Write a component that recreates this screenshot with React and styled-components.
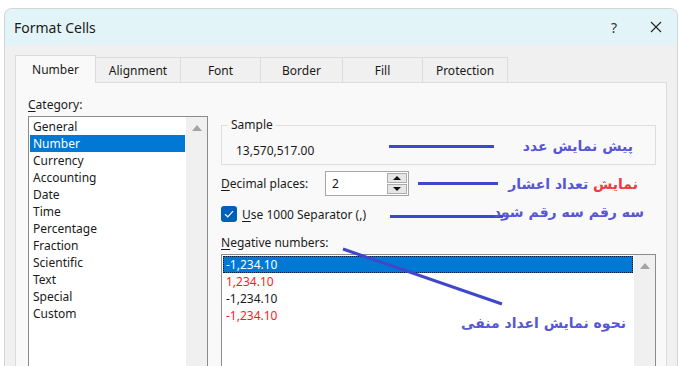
import React from "react";
import styled, { createGlobalStyle } from "styled-components";

const GlobalStyle = createGlobalStyle`
  html, body {
    margin: 0;
    padding: 0;
    background: #ffffff;
  }
  body {
    font-family: "Noto Sans", "Open Sans", sans-serif;
    font-size: 12px;
    color: #1a1a1a;
  }
`;

const Page = styled.div`
  width: 682px;
  height: 366px;
  padding: 8px 4px 0 4px;
  box-sizing: border-box;
  overflow: hidden;
`;

const Window = styled.div`
  height: 100%;
  display: flex;
  flex-direction: column;
  background: #f0f0f0;
  border: 1px solid #cfd6d8;
  border-bottom: none;
  border-radius: 8px 8px 0 0;
  overflow: hidden;
`;

const TitleBar = styled.div`
  height: 36px;
  display: flex;
  align-items: center;
  padding-left: 9px;
  background: #e3f4f8;
`;

const Title = styled.span`
  flex: 1;
  font-size: 14px;
  color: #1a1a1a;
`;

const TitleButton = styled.div`
  width: 42px;
  height: 36px;
  display: flex;
  align-items: center;
  justify-content: center;
  font-size: 14px;
  color: #333;
`;

const Body = styled.div`
  flex: 1;
  display: flex;
  flex-direction: column;
  padding: 10px 10px 0 10px;
`;

const TabRow = styled.div`
  display: flex;
  align-items: flex-end;
  height: 27px;
`;

const Tab = styled.div`
  width: ${(p) => p.$w}px;
  height: ${(p) => (p.$active ? 28 : 25)}px;
  margin-bottom: ${(p) => (p.$active ? -1 : 0)}px;
  box-sizing: border-box;
  display: flex;
  align-items: center;
  justify-content: center;
  background: ${(p) => (p.$active ? "#f9f9f9" : "#f0f0f0")};
  border: 1px solid #dcdcdc;
  border-bottom: none;
  margin-right: -1px;
  position: relative;
  z-index: ${(p) => (p.$active ? 2 : 1)};
  font-size: 12px;
  color: #1a1a1a;
`;

const Panel = styled.div`
  flex: 1;
  background: #f9f9f9;
  border: 1px solid #dcdcdc;
  border-bottom: none;
  display: grid;
  grid-template-columns: 180px 435px;
  column-gap: 13px;
  padding: 13px 10px 0 12px;
`;

const Column = styled.div`
  display: flex;
  flex-direction: column;
`;

const FieldLabel = styled.div`
  height: 17px;
  line-height: 17px;
  margin-top: ${(p) => p.$top || 0}px;
  margin-bottom: ${(p) => p.$gap || 0}px;
  u {
    text-decoration: underline;
    text-underline-offset: 2px;
  }
`;

const ListBox = styled.div`
  display: flex;
  background: #ffffff;
  border: 1px solid #8c8c8c;
  height: ${(p) => p.$h}px;
  box-sizing: border-box;
`;

const Items = styled.div`
  flex: 1;
  padding: 1px;
`;

const Item = styled.div`
  height: 17px;
  line-height: 17px;
  padding-left: 3px;
  white-space: nowrap;
  color: ${(p) => (p.$selected ? "#ffffff" : p.$red ? "#ff1a1a" : "#1a1a1a")};
  background: ${(p) => (p.$selected ? "#0078d4" : "transparent")};
  outline: ${(p) => (p.$focus ? "1px dotted #111" : "none")};
  outline-offset: -1px;
`;

const ScrollTrack = styled.div`
  width: 21px;
  background: #f0f0f0;
  display: flex;
  justify-content: center;
  padding-top: 8px;
  box-sizing: border-box;
`;

const ArrowUp = styled.div`
  width: 0;
  height: 0;
  border-left: 5px solid transparent;
  border-right: 5px solid transparent;
  border-bottom: 6px solid #a3a3a3;
`;

const Group = styled.fieldset`
  margin: 22px 0 0 0;
  padding: 0 0 0 6px;
  border: 1px solid #dedede;
  height: 47px;
  box-sizing: border-box;
  min-width: 0;
`;

const Legend = styled.legend`
  padding: 0 3px;
  font-size: 12px;
  line-height: 14px;
  color: #1a1a1a;
`;

const GroupRow = styled.div`
  display: flex;
  align-items: center;
  height: 24px;
  margin-top: 6px;
  padding-left: 8px;
`;

const Row = styled.div`
  display: flex;
  align-items: center;
  height: ${(p) => p.$h}px;
  margin-top: ${(p) => p.$top}px;
`;

const Fixed = styled.span`
  width: ${(p) => p.$w}px;
  margin-left: ${(p) => p.$ml || 0}px;
  flex: none;
  white-space: nowrap;
  u {
    text-decoration: underline;
    text-underline-offset: 2px;
  }
`;

const SpinInput = styled.div`
  width: 84px;
  height: 25px;
  box-sizing: border-box;
  border: 1px solid #a6a6a6;
  background: #ffffff;
  display: flex;
  align-items: center;
  padding: 1px 1px 1px 6px;
`;

const SpinValue = styled.span`
  flex: 1;
`;

const SpinButtons = styled.div`
  width: 20px;
  height: 100%;
  display: flex;
  flex-direction: column;
  gap: 1px;
`;

const SpinButton = styled.div`
  flex: 1;
  background: #e6e6e6;
  border: 1px solid #adadad;
  display: flex;
  align-items: center;
  justify-content: center;
  &::after {
    content: "";
    border-left: 4px solid transparent;
    border-right: 4px solid transparent;
    ${(p) =>
      p.$down ? "border-top: 4px solid #111;" : "border-bottom: 4px solid #111;"}
  }
`;

const CheckBox = styled.div`
  width: 16px;
  height: 16px;
  border-radius: 3px;
  background: #005fb8;
  display: flex;
  align-items: center;
  justify-content: center;
  flex: none;
`;

const Annotation = styled.div`
  display: flex;
  align-items: center;
  margin-left: ${(p) => p.$ml || 0}px;
`;

const Stroke = styled.div`
  width: ${(p) => p.$w}px;
  height: 3px;
  background: #3f48cc;
  flex: none;
  transform: translateY(${(p) => p.$dy || 0}px);
`;

const Note = styled.span`
  width: ${(p) => p.$w}px;
  transform: translateY(${(p) => p.$dy || 0}px);
  direction: rtl;
  text-align: right;
  font-family: "DejaVu Sans", sans-serif;
  font-weight: bold;
  font-size: 14px;
  color: #5656d6;
  white-space: nowrap;
  flex: none;
`;

const Red = styled.span`
  color: #ec3a3f;
`;

const NegativeArea = styled.div`
  position: relative;
`;

const Callout = styled.svg`
  position: absolute;
  left: 120px;
  top: 9px;
  overflow: visible;
`;

const CalloutNote = styled(Note)`
  position: absolute;
  left: 200px;
  top: 91px;
  width: 205px;
`;

const categories = [
  "General",
  "Number",
  "Currency",
  "Accounting",
  "Date",
  "Time",
  "Percentage",
  "Fraction",
  "Scientific",
  "Text",
  "Special",
  "Custom",
];

const negatives = [
  { text: "-1,234.10", selected: true },
  { text: "1,234.10", red: true },
  { text: "-1,234.10" },
  { text: "-1,234.10", red: true },
];

const tabs = [
  { name: "Number", w: 81, active: true },
  { name: "Alignment", w: 86 },
  { name: "Font", w: 81 },
  { name: "Border", w: 83 },
  { name: "Fill", w: 81 },
  { name: "Protection", w: 86 },
];

function App() {
  return (
    <>
      <GlobalStyle />
      <Page>
        <Window>
          <TitleBar>
            <Title>Format Cells</Title>
            <TitleButton>?</TitleButton>
            <TitleButton>
              <svg width="12" height="12" viewBox="0 0 12 12">
                <path d="M1 1 L11 11 M11 1 L1 11" stroke="#222" strokeWidth="1.1" />
              </svg>
            </TitleButton>
          </TitleBar>
          <Body>
            <TabRow>
              {tabs.map((t) => (
                <Tab key={t.name} $w={t.w} $active={t.active}>
                  {t.name}
                </Tab>
              ))}
            </TabRow>
            <Panel>
              <Column>
                <FieldLabel $gap={3}>
                  <u>C</u>ategory:
                </FieldLabel>
                <ListBox $h={260}>
                  <Items>
                    {categories.map((c) => (
                      <Item key={c} $selected={c === "Number"}>
                        {c}
                      </Item>
                    ))}
                  </Items>
                  <ScrollTrack>
                    <ArrowUp />
                  </ScrollTrack>
                </ListBox>
              </Column>

              <Column>
                <Group>
                  <Legend>Sample</Legend>
                  <GroupRow>
                    <Fixed $w={153}>13,570,517.00</Fixed>
                    <Annotation>
                      <Stroke $w={105} $dy={-4} />
                      <Note $w={139} $dy={-4}>پیش نمایش عدد</Note>
                    </Annotation>
                  </GroupRow>
                </Group>

                <Row $h={25} $top={6}>
                  <Fixed $w={104}>
                    <u>D</u>ecimal places:
                  </Fixed>
                  <SpinInput>
                    <SpinValue>2</SpinValue>
                    <SpinButtons>
                      <SpinButton />
                      <SpinButton $down />
                    </SpinButtons>
                  </SpinInput>
                  <Annotation $ml={9}>
                    <Stroke $w={80} />
                    <Note $w={140}>
                      <Red>نمایش</Red> تعداد اعشار
                    </Note>
                  </Annotation>
                </Row>

                <Row $h={20} $top={8}>
                  <CheckBox>
                    <svg width="10" height="8" viewBox="0 0 10 8">
                      <path d="M1 4.2 L3.8 6.8 L9 1.2" fill="none" stroke="#fff" strokeWidth="1.2" />
                    </svg>
                  </CheckBox>
                  <Fixed $w={148} $ml={5}>
                    <u>U</u>se 1000 Separator (,)
                  </Fixed>
                  <Annotation>
                    <Stroke $w={113} $dy={2} />
                    <Note $w={141} $dy={-2}>سه رقم سه رقم شود</Note>
                  </Annotation>
                </Row>

                <NegativeArea>
                  <FieldLabel $top={10} $gap={3}>
                    <u>N</u>egative numbers:
                  </FieldLabel>
                  <ListBox $h={120}>
                    <Items>
                      {negatives.map((n, i) => (
                        <Item key={i} $selected={n.selected} $focus={n.selected} $red={n.red}>
                          {n.text}
                        </Item>
                      ))}
                    </Items>
                    <ScrollTrack>
                      <ArrowUp />
                    </ScrollTrack>
                  </ListBox>
                  <Callout width="160" height="56">
                    <line x1="2" y1="16" x2="161" y2="71" stroke="#3f48cc" strokeWidth="3" />
                  </Callout>
                  <CalloutNote>نحوه نمایش اعداد منفی</CalloutNote>
                </NegativeArea>
              </Column>
            </Panel>
          </Body>
        </Window>
      </Page>
    </>
  );
}

export default App;
